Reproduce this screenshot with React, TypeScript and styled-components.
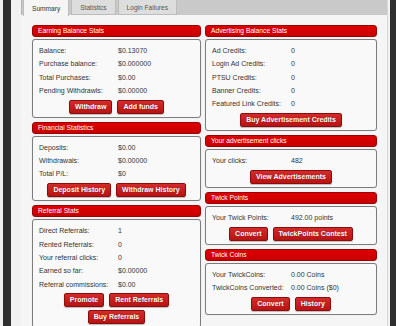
import React from "react";
import styled, { createGlobalStyle } from "styled-components";

const Global = createGlobalStyle`
  html, body { margin: 0; padding: 0; }
  body {
    background: #f1f1f1;
    font-family: "Liberation Sans", Arial, sans-serif;
    overflow: hidden;
  }
`;

const Shell = styled.div`
  display: flex;
  height: 326px;
  width: 396px;
  overflow: hidden;
  background: #f1f1f1;
`;

const Rail = styled.div<{ $left?: boolean }>`
  flex: none;
  width: ${(p) => (p.$left ? "8px" : "6px")};
  margin-left: ${(p) => (p.$left ? "3px" : "2px")};
  background: #2f2f2f;
`;

const Main = styled.div`
  flex: none;
  width: 367px;
  margin-left: 10px;
  display: flex;
  flex-direction: column;
  background: #f5f5f5;
  border-right: 1px solid #d8d8d8;
  box-sizing: border-box;
`;

const TabBar = styled.div`
  height: 15px;
  background: #c9c9c9;
  display: flex;
  align-items: flex-end;
  gap: 2px;
  padding-left: 1px;
  border-left: 1px solid #b5b5b5;
`;

const Tab = styled.div<{ $active?: boolean }>`
  height: ${(p) => (p.$active ? "16px" : "15px")};
  margin-bottom: ${(p) => (p.$active ? "-1px" : "0")};
  box-sizing: border-box;
  padding: 0 8px;
  display: flex;
  align-items: center;
  font-size: 6.6px;
  color: ${(p) => (p.$active ? "#333" : "#555")};
  background: ${(p) => (p.$active ? "#f5f5f5" : "#dddddd")};
  border: 1px solid ${(p) => (p.$active ? "#bdbdbd" : "#bcbcbc")};
  border-top: none;
  border-bottom: ${(p) => (p.$active ? "none" : "1px solid #bcbcbc")};
`;

const Content = styled.div`
  flex: 1;
  display: grid;
  grid-template-columns: 169px 172px;
  column-gap: 4px;
  align-items: start;
  padding: 10px 11px 0 11px;
`;

const Column = styled.div`
  display: flex;
  flex-direction: column;
  gap: 4px;
`;

const Section = styled.section`
  display: flex;
  flex-direction: column;
  gap: 2px;
`;

const Header = styled.div`
  height: 12px;
  box-sizing: border-box;
  border-radius: 3px;
  background: linear-gradient(#de0000, #c80000);
  border: 1px solid #9d0000;
  color: #fff;
  font-size: 6.7px;
  line-height: 10px;
  padding-left: 5px;
  white-space: nowrap;
`;

const Box = styled.div`
  border: 1px solid #7c7c7c;
  border-radius: 3px;
  background: #f9f9f9;
  padding: 4px 6px 3px 6px;
  box-shadow: 0 0 1px rgba(0, 0, 0, 0.15);
`;

const Row = styled.div`
  display: grid;
  grid-template-columns: 79px 1fr;
  height: 13.33px;
  line-height: 13.33px;
  font-size: 7px;
  color: #333;
  white-space: nowrap;
`;

const Buttons = styled.div`
  display: flex;
  flex-wrap: wrap;
  justify-content: center;
  gap: 3px 5px;
  margin-top: 2.5px;
`;

const Button = styled.button`
  height: 14px;
  box-sizing: border-box;
  padding: 0 5px;
  border: 1px solid #8e0b0b;
  border-radius: 2px;
  background: linear-gradient(#d42a2a, #b71414);
  color: #fff;
  font-family: "Liberation Sans", Arial, sans-serif;
  font-weight: bold;
  font-size: 7px;
  line-height: 12px;
  text-shadow: 0 0 1px rgba(80, 0, 0, 0.6);
  box-shadow: 0 1px 1px rgba(0, 0, 0, 0.25);
  cursor: pointer;
  white-space: nowrap;
`;

type Item = [string, string];

const Panel: React.FC<{ title: string; rows: Item[]; buttons: string[] }> = ({
  title,
  rows,
  buttons,
}) => (
  <Section>
    <Header>{title}</Header>
    <Box>
      {rows.map(([k, v]) => (
        <Row key={k}>
          <span>{k}</span>
          <span>{v}</span>
        </Row>
      ))}
      <Buttons>
        {buttons.map((b) => (
          <Button key={b}>{b}</Button>
        ))}
      </Buttons>
    </Box>
  </Section>
);

export default function App() {
  return (
    <>
      <Global />
      <Shell>
        <Rail $left />
        <Main>
          <TabBar>
            <Tab $active>Summary</Tab>
            <Tab>Statistics</Tab>
            <Tab>Login Failures</Tab>
          </TabBar>
          <Content>
            <Column>
              <Panel
                title="Earning Balance Stats"
                rows={[
                  ["Balance:", "$0.13070"],
                  ["Purchase balance:", "$0.000000"],
                  ["Total Purchases:", "$0.00"],
                  ["Pending Withdrawls:", "$0.00000"],
                ]}
                buttons={["Withdraw", "Add funds"]}
              />
              <Panel
                title="Financial Statistics"
                rows={[
                  ["Deposits:", "$0.00"],
                  ["Withdrawals:", "$0.00000"],
                  ["Total P/L:", "$0"],
                ]}
                buttons={["Deposit History", "Withdraw History"]}
              />
              <Panel
                title="Referral Stats"
                rows={[
                  ["Direct Referrals:", "1"],
                  ["Rented Referrals:", "0"],
                  ["Your referral clicks:", "0"],
                  ["Earned so far:", "$0.00000"],
                  ["Referral commissions:", "$0.00"],
                ]}
                buttons={["Promote", "Rent Referrals", "Buy Referrals"]}
              />
            </Column>
            <Column>
              <Panel
                title="Advertising Balance Stats"
                rows={[
                  ["Ad Credits:", "0"],
                  ["Login Ad Credits:", "0"],
                  ["PTSU Credits:", "0"],
                  ["Banner Credits:", "0"],
                  ["Featured Link Credits:", "0"],
                ]}
                buttons={["Buy Advertisement Credits"]}
              />
              <Panel
                title="Your advertisement clicks"
                rows={[["Your clicks:", "482"]]}
                buttons={["View Advertisements"]}
              />
              <Panel
                title="Twick Points"
                rows={[["Your Twick Points:", "492.00 points"]]}
                buttons={["Convert", "TwickPoints Contest"]}
              />
              <Panel
                title="Twick Coins"
                rows={[
                  ["Your TwickCoins:", "0.00 Coins"],
                  ["TwickCoins Converted:", "0.00 Coins ($0)"],
                ]}
                buttons={["Convert", "History"]}
              />
            </Column>
          </Content>
        </Main>
        <Rail />
      </Shell>
    </>
  );
}
